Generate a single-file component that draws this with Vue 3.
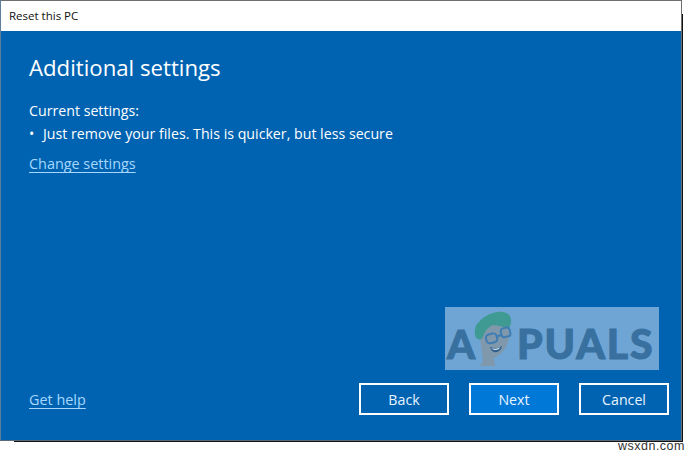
<template>
  <div class="page">
    <div class="window">
      <div class="titlebar">Reset this PC</div>
      <div class="content">
        <h1 class="heading">Additional settings</h1>
        <p class="label">Current settings:</p>
        <ul class="list">
          <li>
            <span class="bullet">•</span>
            <span>Just remove your files. This is quicker, but less secure</span>
          </li>
        </ul>
        <a class="link change" href="#">Change settings</a>
        <div class="footer">
          <a class="link" href="#">Get help</a>
          <div class="buttons">
            <button
              v-for="btn in buttons"
              :key="btn.label"
              class="btn"
              :class="{ primary: btn.primary }"
            >
              {{ btn.label }}
            </button>
          </div>
        </div>
        <div class="watermark">
          <span class="wm-a">A</span>
          <svg class="mascot" width="44" height="56" viewBox="0 0 44 56">
            <path d="M7 27 L10 50 L7 55 L22 55 L21 47 C28 44 34 38 37 24 L36 14 L18 12 Z" fill="#7f98ab" />
            <path d="M2 24 C1 18 3 13 6 11 C9 7 16 2 25 1 C30 0 35 2 37 5 C39 9 38 14 36 17 C33 18 27 14 20 14 C15 16 12 20 10 26 C8 30 3 29 2 24 Z" fill="#3f9a94" />
            <g fill="none" stroke="#3f7cb4" stroke-width="2">
              <rect x="13" y="23" width="11" height="9" rx="3.5" transform="rotate(-14 18 27)" />
              <rect x="28" y="17" width="9" height="9" rx="3" transform="rotate(-14 32 21)" />
              <path d="M23 26 L28 24" />
            </g>
            <path d="M17 36 C21 38 27 37 29 35 C28 42 19 44 17 36 Z" fill="#2f5f8c" />
            <path d="M18 37 C21 38 25 38 27 36 L26 38 C23 40 20 39 18 37 Z" fill="#cfe0ea" />
          </svg>
          <span class="wm-text">PUALS</span>
        </div>
      </div>
    </div>
    <div class="credit">wsxdn.com</div>
  </div>
</template>

<script setup>
const buttons = [
  { label: 'Back' },
  { label: 'Next', primary: true },
  { label: 'Cancel' }
]
</script>

<style>
html,
body {
  margin: 0;
  background: #fff;
}
</style>

<style scoped>
.page {
  position: relative;
  width: 697px;
  height: 456px;
  overflow: hidden;
  background: #fff;
  font-family: "Open Sans", "Noto Sans", sans-serif;
}

.window {
  position: relative;
  box-sizing: border-box;
  width: 682px;
  height: 441px;
  display: flex;
  flex-direction: column;
  border: 1px solid #6f6f6f;
  border-left-color: #5f7f9f;
  border-bottom-color: #5a6a7a;
}

/* the drop shadow only starts a bit below / right of the corner */
.window::before {
  content: "";
  position: absolute;
  top: 13px;
  right: -2px;
  width: 1px;
  bottom: -2px;
  background: #111;
}

.window::after {
  content: "";
  position: absolute;
  left: 13px;
  right: -2px;
  bottom: -2px;
  height: 1px;
  background: #111;
}

.titlebar {
  height: 30px;
  flex: none;
  box-sizing: border-box;
  padding: 7px 0 0 8px;
  background: #fff;
  color: #111;
  font-size: 11.5px;
  line-height: 16px;
}

.content {
  position: relative;
  flex: 1;
  display: flex;
  flex-direction: column;
  padding: 0 0 0 28px;
  background: #0063b1;
  color: #fff;
}

.heading {
  margin: 21px 0 0;
  font-size: 22.2px;
  font-weight: 400;
  line-height: 32px;
}

.label {
  margin: 17px 0 0;
  font-size: 14.2px;
  line-height: 20px;
}

.list {
  margin: 3px 0 0;
  padding: 0;
  list-style: none;
  font-size: 14.2px;
  line-height: 20px;
}

.list li {
  display: flex;
  gap: 9px;
}

.bullet {
  width: 5px;
}

.link {
  color: #a6d8ff;
  font-size: 14.4px;
  line-height: 18px;
  text-decoration: underline;
  text-underline-offset: 3px;
}

.change {
  align-self: flex-start;
  margin-top: 11px;
}

.footer {
  margin-top: auto;
  margin-bottom: 25px;
  display: flex;
  align-items: center;
  justify-content: space-between;
  padding-right: 12px;
}

.footer .link {
  margin-top: 2px;
}

.buttons {
  display: flex;
  gap: 20px;
}

.btn {
  box-sizing: border-box;
  width: 90px;
  height: 32px;
  padding: 0;
  border: 2px solid #fff;
  background: #0063b1;
  color: #e8f4ff;
  font-family: inherit;
  font-size: 14.2px;
}

.btn.primary {
  background: #0078d7;
}

.watermark {
  position: absolute;
  top: 276px;
  left: 444px;
  box-sizing: border-box;
  width: 214px;
  height: 63px;
  display: flex;
  align-items: flex-end;
  background: #6fa5d5;
  color: #38709f;
  font-family: "Lato", "Open Sans", sans-serif;
  font-weight: 900;
  line-height: 1;
}

.wm-a {
  margin: 0 0 9px 2px;
  font-size: 40px;
  line-height: 34px;
  -webkit-text-stroke: 1px #38709f;
}

.mascot {
  flex: none;
  margin: 0 0 3px -2px;
}

.wm-text {
  margin: 0 0 9px 0;
  font-size: 41px;
  line-height: 34px;
  letter-spacing: 1.8px;
  -webkit-text-stroke: 1px #38709f;
}

.credit {
  position: absolute;
  right: 12px;
  bottom: 3px;
  color: #333;
  font-family: "Liberation Sans", sans-serif;
  font-size: 12.5px;
  letter-spacing: 0.5px;
  line-height: 13px;
}
</style>
